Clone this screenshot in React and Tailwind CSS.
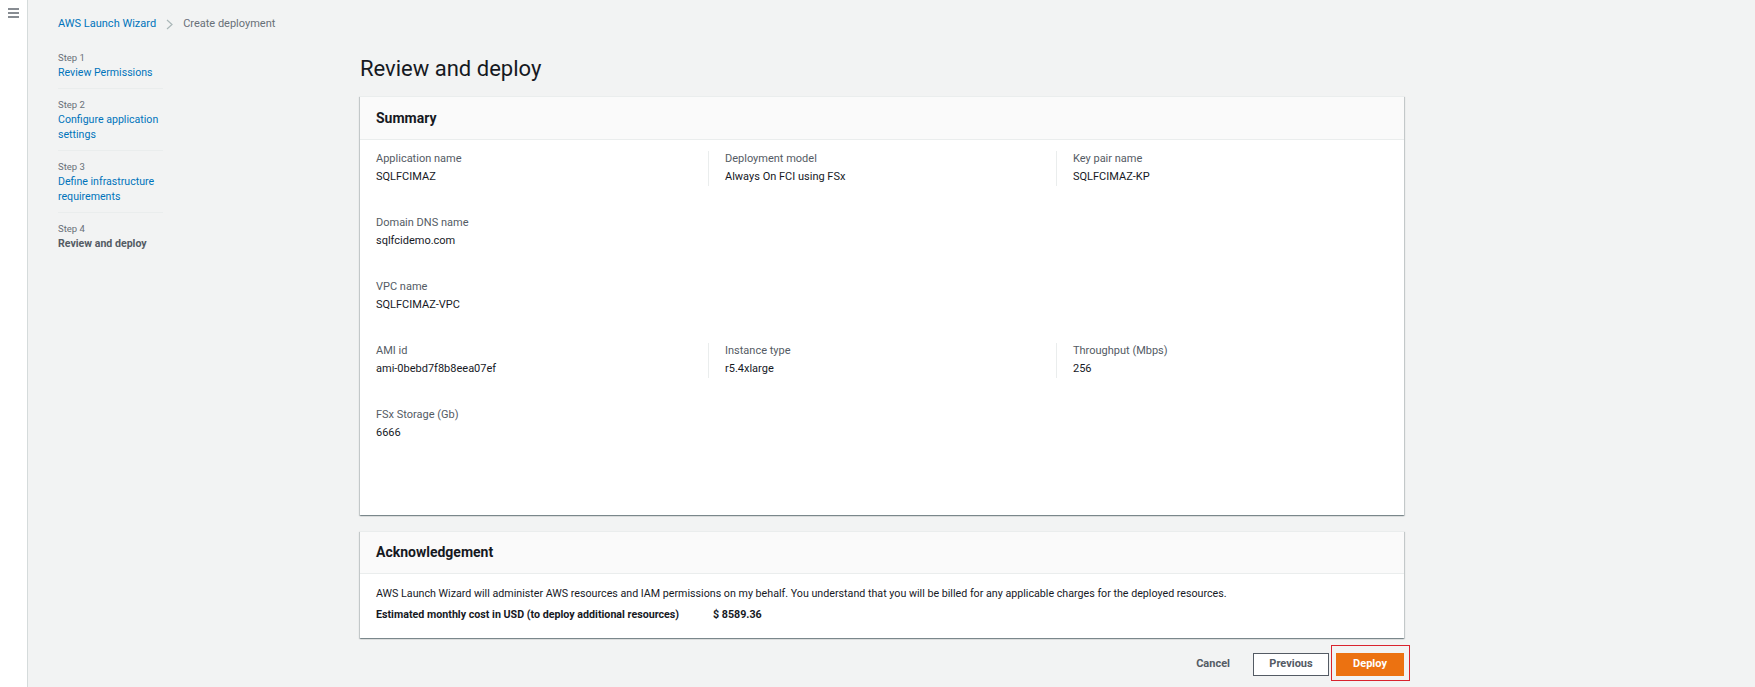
import React from "react";

const rows = [
  [
    ["Application name", "SQLFCIMAZ"],
    ["Deployment model", "Always On FCI using FSx"],
    ["Key pair name", "SQLFCIMAZ-KP"],
  ],
  [["Domain DNS name", "sqlfcidemo.com"]],
  [["VPC name", "SQLFCIMAZ-VPC"]],
  [
    ["AMI id", "ami-0bebd7f8b8eea07ef"],
    ["Instance type", "r5.4xlarge"],
    ["Throughput (Mbps)", "256"],
  ],
  [["FSx Storage (Gb)", "6666"]],
];

const steps = [
  { n: 1, title: "Review Permissions" },
  { n: 2, title: "Configure application settings" },
  { n: 3, title: "Define infrastructure requirements" },
  { n: 4, title: "Review and deploy", current: true },
];

function Field({ label, value, first }) {
  return (
    <div className={first ? "pl-4" : "pl-4 border-l border-[#eaeded]"}>
      <div className="text-[11px] leading-[15px] text-[#545b64]">{label}</div>
      <div className="pt-[2px] text-[11px] leading-[18px] text-[#16191f]">{value}</div>
    </div>
  );
}

export default function App() {
  return (
    <div className="min-h-screen flex bg-[#f2f3f3] font-[family-name:Roboto,sans-serif]">
      <div className="w-[28px] shrink-0 bg-white border-r border-[#d5dbdb]">
        <svg className="ml-[8px] mt-[8px]" width="11" height="10" viewBox="0 0 11 10">
          <g stroke="#545b64" strokeWidth="1.4">
            <line x1="0" y1="1" x2="11" y2="1" />
            <line x1="0" y1="5" x2="11" y2="5" />
            <line x1="0" y1="9" x2="11" y2="9" />
          </g>
        </svg>
      </div>

      <div className="flex-1 pl-[30px]">
        <div className="pt-4 flex items-center h-8 text-[11px] leading-4">
          <span className="text-[#0073bb]">AWS Launch Wizard</span>
          <svg className="mx-[10px]" width="7" height="11" viewBox="0 0 7 11">
            <polyline points="1,1 6,5.5 1,10" fill="none" stroke="#aab7b8" strokeWidth="1.2" />
          </svg>
          <span className="text-[#687078]">Create deployment</span>
        </div>

        <div className="flex">
          <nav className="w-[302px] shrink-0 pt-[19px]">
            <ul className="w-[105px]">
              {steps.map((s, i) => (
                <li
                  key={s.n}
                  className={
                    (i > 0 ? "pt-[9px] " : "") +
                    (i < steps.length - 1 ? "pb-[8px] border-b border-[#eaeded]" : "")
                  }
                >
                  <div className="text-[9.5px] leading-[14px] text-[#687078]">Step {s.n}</div>
                  <div
                    className={
                      s.current
                        ? "text-[10.6px] leading-[15px] font-bold text-[#545b64]"
                        : "text-[10.6px] leading-[15px] text-[#0073bb]"
                    }
                  >
                    {s.title}
                  </div>
                </li>
              ))}
            </ul>
          </nav>

          <main className="w-[1044px] shrink-0 pt-[22px]">
            <h1 className="text-[22px] leading-[30px] text-[#16191f] mb-3">Review and deploy</h1>

            <section className="bg-white border-t border-[#eaeded] shadow-[0_1px_1px_0_rgba(0,28,36,0.3),1px_1px_1px_0_rgba(0,28,36,0.15),-1px_1px_1px_0_rgba(0,28,36,0.15)]">
              <div className="h-[43px] px-4 flex items-center bg-[#fafafa] border-b border-[#eaeded]">
                <h2 className="text-[14px] font-bold text-[#16191f]">Summary</h2>
              </div>
              <div className="pt-[11px] pb-[73px] flex flex-col gap-[29px]">
                {rows.map((row, i) => (
                  <div key={i} className="grid grid-cols-3">
                    {row.map(([label, value], j) => (
                      <Field key={label} label={label} value={value} first={j === 0} />
                    ))}
                  </div>
                ))}
              </div>
            </section>

            <section className="mt-4 bg-white border-t border-[#eaeded] shadow-[0_1px_1px_0_rgba(0,28,36,0.3),1px_1px_1px_0_rgba(0,28,36,0.15),-1px_1px_1px_0_rgba(0,28,36,0.15)]">
              <div className="h-[42px] px-4 flex items-center bg-[#fafafa] border-b border-[#eaeded]">
                <h2 className="text-[14px] font-bold text-[#16191f]">Acknowledgement</h2>
              </div>
              <div className="px-4 pt-[10px] pb-[12px] text-[10.7px] text-[#16191f]">
                <p className="leading-5">
                  AWS Launch Wizard will administer AWS resources and IAM permissions on my behalf. You
                  understand that you will be billed for any applicable charges for the deployed resources.
                </p>
                <div className="flex leading-[22px] font-bold">
                  <span className="w-[337px]">Estimated monthly cost in USD (to deploy additional resources)</span>
                  <span>$ 8589.36</span>
                </div>
              </div>
            </section>

            <div className="mt-[15px] flex justify-end items-center text-[11px] font-bold">
              <button className="mr-[23px] text-[#545b64]">Cancel</button>
              <button className="w-[76px] h-[23px] bg-white border border-[#545b64] text-[#545b64]">
                Previous
              </button>
              <div className="relative ml-[7px]">
                <button className="w-[68px] h-[23px] bg-[#ec7211] text-white">Deploy</button>
                <span className="absolute -left-[5px] -right-[6px] -top-[8px] -bottom-[5px] border border-[#d9232e] pointer-events-none" />
              </div>
            </div>
          </main>
        </div>
      </div>
    </div>
  );
}
